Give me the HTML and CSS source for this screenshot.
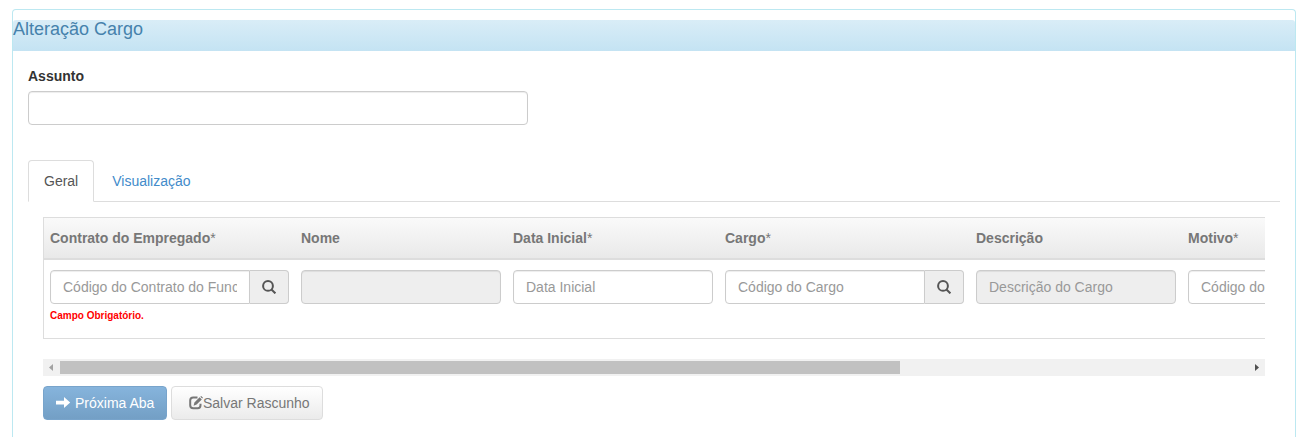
FILE: index.html
```html
<!DOCTYPE html>
<html lang="pt-BR">
<head>
<meta charset="utf-8">
<title>Alteração Cargo</title>
<link rel="stylesheet" href="styles.css">
</head>
<body>
<section class="panel">
  <h3 class="panel-title">Alteração Cargo</h3>
  <div class="panel-body">
    <label class="label" for="assunto">Assunto</label>
    <input class="field subject" id="assunto" type="text">
    <nav class="tabs">
      <a class="tab active">Geral</a>
      <a class="tab">Visualização</a>
    </nav>
    <div class="tab-content">
      <div class="table">
        <div class="row head">
          <div>Contrato do Empregado<span class="req">*</span></div>
          <div>Nome</div>
          <div>Data Inicial<span class="req">*</span></div>
          <div>Cargo<span class="req">*</span></div>
          <div>Descrição</div>
          <div>Motivo<span class="req">*</span></div>
        </div>
        <div class="row body">
          <div>
            <div class="group">
              <input class="field" type="text" placeholder="Código do Contrato do Funcionário">
              <span class="addon"><svg class="search" viewBox="0 0 14 14"><circle cx="6" cy="5.900" r="4.900"/><path d="M9.200 9.200l4.200 4.200"/></svg></span>
            </div>
            <p class="error">Campo Obrigatório.</p>
          </div>
          <div><input class="field" type="text" disabled></div>
          <div><input class="field" type="text" placeholder="Data Inicial"></div>
          <div>
            <div class="group">
              <input class="field" type="text" placeholder="Código do Cargo">
              <span class="addon"><svg class="search" viewBox="0 0 14 14"><circle cx="6" cy="5.900" r="4.900"/><path d="M9.200 9.200l4.200 4.200"/></svg></span>
            </div>
          </div>
          <div><input class="field" type="text" placeholder="Descrição do Cargo" disabled></div>
          <div><input class="field" type="text" placeholder="Código do Motivo"></div>
        </div>
      </div>
      <div class="scrollbar">
        <svg class="arrow" viewBox="0 0 17 17"><path fill="#a3a3a3" d="M10 5v7L6 8.500z"/></svg>
        <div class="track"><div class="thumb"></div></div>
        <svg class="arrow" viewBox="0 0 17 17"><path fill="#505050" d="M7 5v7l4-3.500z"/></svg>
      </div>
      <div class="actions">
        <button class="btn primary"><svg class="next" viewBox="0 0 14 14"><path d="M0 4.700h8V1l6.200 5.500L8 12V8.400H0z"/></svg>Próxima Aba</button>
        <button class="btn default"><svg class="edit" viewBox="0 0 14 14"><path class="frame" d="M8.500 1.600H4.200Q1.200 1.600 1.200 4.600v4.700q0 2.900 3 2.900h4.400q2.900 0 2.900-2.900V7.800"/><path d="M4.600 9.700l.8-3.300 5.200-5.200 2.200 2.200-5.200 5.200zM11.300.7l.9-.8 1.800 1.800-.8.900z"/></svg>Salvar Rascunho</button>
      </div>
    </div>
  </div>
</section>
</body>
</html>
```
FILE: styles.css
```css
* { box-sizing: border-box; }
html, body { height: 437px; overflow: hidden; }
body {
  margin: 0;
  padding: 9px 19px 0 12px;
  background: #fff;
  color: #333;
  font: 14px/20px "Liberation Sans", Arial, sans-serif;
}
.panel {
  height: 428px;
  padding-top: 10px;
  border: 1px solid #bce8f1;
  border-bottom: 0;
  border-radius: 4px 4px 0 0;
}
.panel-title {
  height: 31px;
  margin: 0;
  background: linear-gradient(#d9edf7, #c4e3f3);
  border-radius: 3px 3px 0 0;
  color: #4682ac;
  font-size: 18px;
  font-weight: 400;
  line-height: 19px;
}
.panel-body { padding: 15px 15px 0; }
.label {
  display: block;
  margin-bottom: 5px;
  font-weight: 700;
}
.field {
  display: block;
  width: 200px;
  height: 34px;
  padding: 6px 12px;
  border: 1px solid #ccc;
  border-radius: 4px;
  background: #fff;
  box-shadow: inset 0 1px 1px rgba(0, 0, 0, .075);
  color: #555;
  font: inherit;
}
.field::placeholder { color: #999; opacity: 1; }
.field:disabled { background: #eee; }
.subject { width: 500px; }
.tabs {
  display: flex;
  gap: 2px;
  height: 42px;
  margin-top: 35px;
  border-bottom: 1px solid #ddd;
}
.tab {
  height: 42px;
  padding: 10px 15px;
  border: 1px solid transparent;
  border-radius: 4px 4px 0 0;
  color: #428bca;
}
.tab.active {
  border-color: #ddd #ddd transparent;
  background: #fff;
  color: #555;
}
.tab-content { padding: 15px 15px 0; }
.table {
  overflow: hidden;
  border: solid #ddd;
  border-width: 1px 0 1px 1px;
}
.row {
  display: grid;
  grid-template-columns: 239px 200px 200px 239px 200px 200px;
  column-gap: 12px;
  padding-left: 6px;
}
.head {
  height: 42px;
  padding-top: 10px;
  border-bottom: 2px solid #ddd;
  background: linear-gradient(#fafafa, #e9e9e9);
  color: #777;
  font-weight: 700;
}
.req { font-weight: 400; }
.body { height: 78px; padding-top: 10px; }
.group { display: flex; }
.group .field { border-radius: 4px 0 0 4px; }
.addon {
  display: grid;
  place-items: center;
  width: 39px;
  height: 34px;
  border: 1px solid #ccc;
  border-left: 0;
  border-radius: 0 4px 4px 0;
  background: #eee;
}
.search {
  width: 14px;
  height: 14px;
  fill: none;
  stroke: #555;
  stroke-width: 2;
}
.error {
  margin: 2px 0 0;
  color: #f00;
  font-size: 10px;
  font-weight: 700;
}
.scrollbar {
  display: flex;
  height: 17px;
  margin-top: 20px;
  background: #f1f1f1;
}
.arrow { width: 17px; height: 17px; }
.track { flex: 1; padding: 2px 0; }
.thumb { width: 840px; height: 13px; background: #c1c1c1; }
.actions { display: flex; gap: 4px; margin-top: 10px; }
.btn {
  display: flex;
  align-items: center;
  height: 34px;
  padding: 0 0 0 12px;
  border: 1px solid;
  border-radius: 4px;
  font: inherit;
  white-space: nowrap;
}
.primary {
  width: 124px;
  border-color: #78a4cb;
  background: linear-gradient(#86b4dc, #739fc5);
  color: #fff;
}
.default {
  width: 152px;
  padding-left: 17px;
  border-color: #ddd;
  background: linear-gradient(#fff, #ebebeb);
  color: #777;
}
.next, .edit {
  flex: none;
  width: 14px;
  height: 14px;
  fill: currentColor;
  overflow: visible;
}
.next { margin-right: 5px; }
.frame { fill: none; stroke: currentColor; stroke-width: 2; }
```
